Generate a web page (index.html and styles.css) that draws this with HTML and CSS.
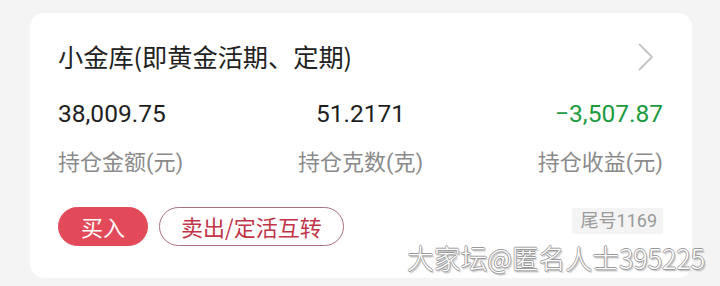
FILE: index.html
```html
<!DOCTYPE html>
<html lang="zh-CN">
<head>
<meta charset="utf-8">
<link rel="stylesheet" href="styles.css">
</head>
<body>
<div class="card">
  <div class="header">
    <div class="title">小金库(即黄金活期、定期)</div>
    <svg class="chev" width="16" height="28" viewBox="0 0 16 28"><path d="M1.5 1.5 L14 14 L1.5 26.5" fill="none" stroke="#c4c4c4" stroke-width="1.8" stroke-linecap="round" stroke-linejoin="round"/></svg>
  </div>
  <div class="stats">
    <div class="stat left">
      <div class="num">38,009.75</div>
      <div class="label">持仓金额(元)</div>
    </div>
    <div class="stat mid">
      <div class="num">51.2171</div>
      <div class="label">持仓克数(克)</div>
    </div>
    <div class="stat right">
      <div class="num neg">−3,507.87</div>
      <div class="label">持仓收益(元)</div>
    </div>
  </div>
  <div class="actions">
    <button class="btn buy">买入</button>
    <button class="btn sell">卖出/定活互转</button>
    <span class="tail">尾号1169</span>
  </div>
</div>
<div class="watermark">大家坛@匿名人士395225</div>
</body>
</html>
```

FILE: styles.css
```css
html, body {
  margin: 0;
  padding: 0;
}
body {
  width: 720px;
  height: 286px;
  background: #f4f4f4;
  position: relative;
  overflow: hidden;
  font-family: Roboto, "Noto Sans CJK SC", sans-serif;
}
.card {
  box-sizing: border-box;
  margin: 13px 0 0 30px;
  width: 662px;
  height: 265px;
  background: #ffffff;
  border-radius: 14px;
  padding: 26px 29px 0 28px;
}
.header {
  display: flex;
  align-items: center;
  justify-content: space-between;
  height: 34px;
}
.title {
  font-family: "Noto Sans CJK SC", sans-serif;
  font-size: 25.2px;
  line-height: 34px;
  color: #222222;
}
.chev {
  margin-right: 9px;
  margin-top: 2px;
}
.stats {
  display: grid;
  grid-template-columns: 1fr 1fr 1fr;
  margin-top: 26px;
}
.stat {
  display: flex;
  flex-direction: column;
  gap: 19px;
}
.left { text-align: left; }
.mid { text-align: center; }
.right { text-align: right; }
.num {
  font-size: 24.5px;
  line-height: 30px;
  color: #1e1e1e;
}
.num.neg {
  color: #1b9a3e;
}
.label {
  font-size: 22px;
  line-height: 30px;
  color: #8a8a8a;
}
.actions {
  display: flex;
  align-items: flex-start;
  margin-top: 29px;
}
.btn {
  box-sizing: border-box;
  height: 39px;
  border-radius: 20px;
  padding: 0 21px;
  font-family: "Noto Sans CJK SC", sans-serif;
  font-size: 22px;
  line-height: 37px;
  margin: 0;
}
.buy {
  background: #e34a59;
  color: #ffffff;
  border: 1px solid #e34a59;
  padding: 0 22px;
}
.sell {
  margin-left: 11px;
  background: #ffffff;
  color: #c23448;
  border: 1px solid #a8707a;
}
.tail {
  margin-left: auto;
  margin-top: 1px;
  background: #f4f4f4;
  color: #9a9a9a;
  font-size: 18px;
  line-height: 26px;
  padding: 0 6px 0 9px;
}
.watermark {
  position: absolute;
  left: 407px;
  top: 241px;
  font-family: "Noto Sans CJK SC", sans-serif;
  font-weight: 300;
  font-size: 26.8px;
  line-height: 34px;
  color: #ffffff;
  text-shadow: 0.8px 0 0 #9a9a9a, -0.8px 0 0 #9a9a9a, 0 0.8px 0 #9a9a9a, 0 -0.8px 0 #9a9a9a, 1.5px 1.5px 1.5px rgba(0,0,0,0.3);
  white-space: nowrap;
}
```
